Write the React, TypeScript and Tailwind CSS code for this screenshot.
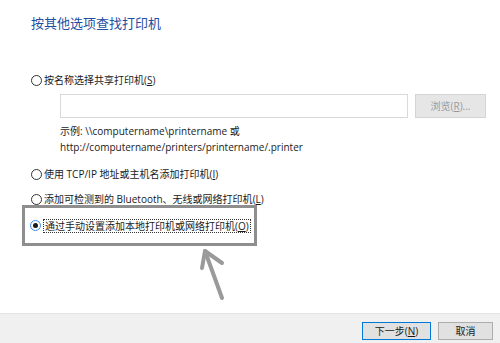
const font = "font-['Open_Sans','Noto_Sans_CJK_SC',sans-serif]";

const Radio = ({ checked = false }: { checked?: boolean }) => {
  return (
    <span
      className={[
        'flex h-[11px] w-[11px] shrink-0 items-center justify-center rounded-full border bg-white',
        checked ? 'border-[#3a8ee6]' : 'border-[#333]',
      ].join(' ')}
    >
      {checked && <span className="h-[5px] w-[5px] rounded-full bg-[#1a1a1a]" />}
    </span>
  );
}

const Option = ({ label, accel, checked = false, focus = false }: { label: string; accel: string; checked?: boolean; focus?: boolean }) => {
  return (
    <div className="flex h-[14px] items-center gap-[2px] whitespace-nowrap text-[10px] leading-[14px] text-[#1a1a1a]">
      <Radio checked={checked} />
      <span className={focus ? 'border border-dotted border-[#333] px-[1px] leading-[12px]' : ''}>
        {label}(<span className="underline">{accel}</span>)
      </span>
    </div>
  );
}

const App = () => {
  return (
    <div className={`relative flex h-[343px] w-[500px] flex-col bg-white ${font}`}>
      <div className="flex-1 pl-[31px]">
        <div className="mt-[14px] text-[13px] leading-[18px] text-[#1e4fa2]">按其他选项查找打印机</div>

        <div className="mt-[41px]">
          <Option label="按名称选择共享打印机" accel="S" />
        </div>

        <div className="ml-[29px] mt-[7px] flex gap-[7px]">
          <div className="h-[24px] w-[348px] border border-[#d9d9d9] bg-white" />
          <div className="flex h-[24px] w-[71px] items-center justify-center border border-[#d4d4d4] bg-[#e6e6e6] text-[10px] text-[#9a9a9a]">
            浏览(<span className="underline">R</span>)...
          </div>
        </div>

        <div className="ml-[29px] mt-[5px] whitespace-nowrap text-[10px] leading-[16px] text-[#1a1a1a]">
          <div>示例: \\computername\printername 或</div>
          <div>http://computername/printers/printername/.printer</div>
        </div>

        <div className="mt-[12px]">
          <Option label="使用 TCP/IP 地址或主机名添加打印机" accel="I" />
        </div>
        <div className="mt-[11px]">
          <Option label="添加可检测到的 Bluetooth、无线或网络打印机" accel="L" />
        </div>

        <div className="-ml-[9px] -mt-[1px] flex h-[41px] w-[235px] items-center border-[3px] border-[#8e8e8e] pl-[5px]">
          <Option label="通过手动设置添加本地打印机或网络打印机" accel="O" checked focus />
        </div>
      </div>

      <div className="flex h-[30px] items-start justify-end gap-[7px] border-t border-[#e3e3e3] bg-[#f0f0f0] pr-[7px] pt-[8px] text-[10px] text-[#1a1a1a]">
        <div className="flex h-[18px] w-[69px] items-center justify-center border border-[#0078d7] bg-[#e1e1e1]">
          下一步(<span className="underline">N</span>)
        </div>
        <div className="flex h-[18px] w-[55px] items-center justify-center border border-[#adadad] bg-[#e1e1e1]">
          取消
        </div>
      </div>

      <svg className="absolute left-[195px] top-[245px]" width="40" height="60" viewBox="0 0 40 60" fill="none">
        <path d="M27 53L10 6" stroke="#9a9a9a" strokeWidth="4" strokeLinecap="round" />
        <path d="M7 23L10 6L27 18" stroke="#9a9a9a" strokeWidth="4" strokeLinecap="round" strokeLinejoin="round" />
      </svg>
    </div>
  );
}

export default App;
